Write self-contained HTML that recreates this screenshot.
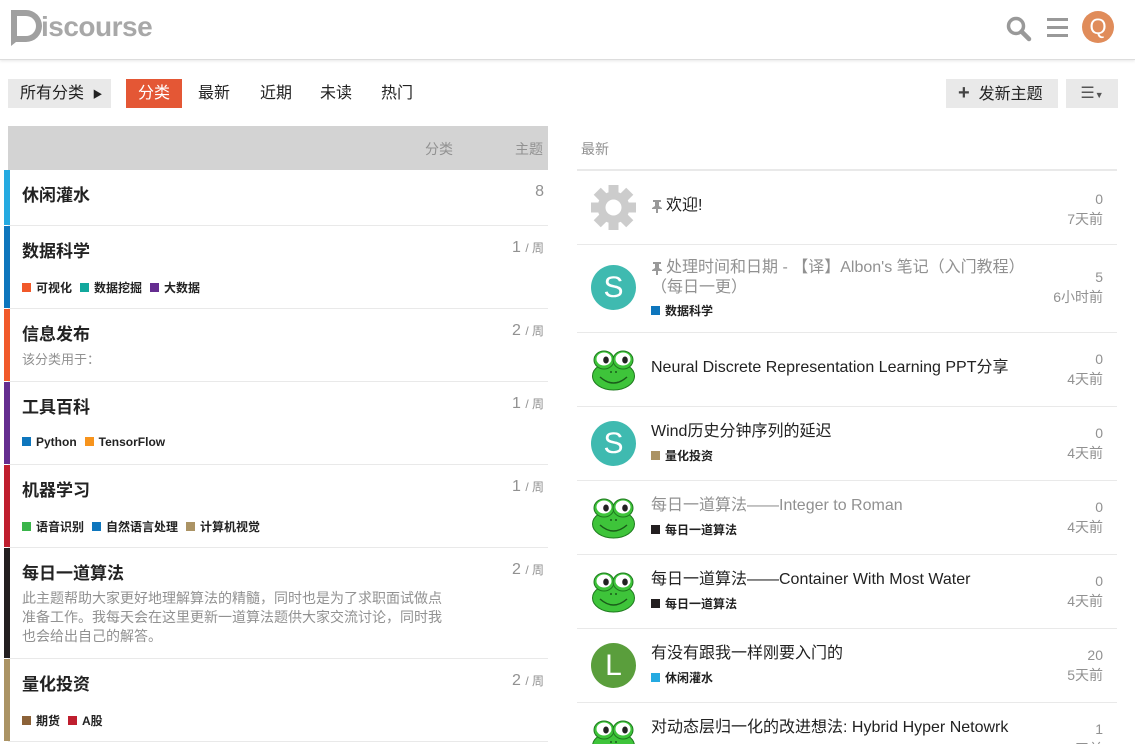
<!DOCTYPE html>
<html><head><meta charset="utf-8">
<style>
*{margin:0;padding:0;box-sizing:border-box}
body{width:1135px;height:744px;overflow:hidden;background:#fff;font-family:"Liberation Sans","Noto Sans CJK SC",sans-serif;color:#222;position:relative}
.a{position:absolute}
.hdr{left:0;top:0;width:1135px;height:60px;border-bottom:1px solid #ddd;box-shadow:0 1px 3px rgba(0,0,0,.1)}
.nav{top:79px;height:29px;font-size:16px;line-height:29px;padding:0 12px;white-space:nowrap}
.btn{background:#e9e9e9;color:#222}
.cat{left:8px;width:540px;border-bottom:1px solid #e9e9e9}
.bar{position:absolute;left:-4px;top:0;bottom:0;width:6px}
.cn{position:absolute;left:14px;top:11px;font-size:17px;font-weight:bold;color:#222}
.cnt{position:absolute;right:4px;top:13px;font-size:16px;color:#919191}
.cnt small{font-size:12px}
.subs{position:absolute;left:14px;font-size:12px;font-weight:bold;color:#222}
.sq{display:inline-block;width:9px;height:9px;margin-right:5px;vertical-align:-0px}
.subs span.i{margin-right:8px}
.desc{position:absolute;left:14px;top:42px;font-size:14px;color:#919191;line-height:19px}
.tp{left:577px;width:540px;border-bottom:1px solid #e9e9e9}
.av{position:absolute;left:14px;width:45px;height:45px}
.tt{position:absolute;left:74px;font-size:16px;color:#222;line-height:20px}
.tc{position:absolute;left:74px;font-size:12px;font-weight:bold;color:#222}
.rt{position:absolute;right:14px;text-align:right;font-size:14px;color:#919191;line-height:20px}
.letter{border-radius:50%;color:#fff;font-size:30px;text-align:center;line-height:45px;font-family:"Liberation Sans",sans-serif}
</style></head><body>
<svg width="0" height="0" style="position:absolute"><defs>
<g id="frog">
<ellipse cx="22.5" cy="29" rx="21" ry="14" fill="#3ec43a" stroke="#1e7a1e" stroke-width="1"/>
<ellipse cx="13" cy="13" rx="10" ry="9" fill="#3ec43a" stroke="#1e7a1e"/>
<ellipse cx="32" cy="13" rx="10" ry="9" fill="#3ec43a" stroke="#1e7a1e"/>
<ellipse cx="13" cy="12" rx="7.5" ry="6.5" fill="#fff"/>
<ellipse cx="32" cy="12" rx="7.5" ry="6.5" fill="#fff"/>
<ellipse cx="15" cy="13" rx="2.8" ry="3.5" fill="#222"/>
<ellipse cx="34" cy="13" rx="2.8" ry="3.5" fill="#222"/>
<path d="M9 30 Q22.5 42 36 30" stroke="#1a5c1a" stroke-width="1.5" fill="none"/>
<circle cx="20" cy="25" r="1" fill="#1a5c1a"/><circle cx="25" cy="25" r="1" fill="#1a5c1a"/>
</g></defs></svg>

<div class="a hdr"></div>
<div class="a" style="left:8px;top:6px;width:36px;height:40px">
<svg width="36" height="40" viewBox="0 0 36 40"><path d="M3 4 H18 A16 16 0 0 1 18 36 H8 L3 40 Z" fill="#a0a0a0"/><path d="M9 10 H18 A9 9 0 0 1 18 30 H9 Z" fill="#fff"/></svg></div>
<div class="a" style="left:41px;top:11px;font-size:28px;font-weight:bold;color:#a8a8a8;letter-spacing:-0.5px">iscourse</div>
<svg class="a" style="left:1006px;top:16px" width="26" height="26" viewBox="0 0 26 26"><circle cx="10" cy="10" r="7.5" stroke="#999" stroke-width="3.5" fill="none"/><path d="M15.5 15.5 L23 23" stroke="#999" stroke-width="4.5" stroke-linecap="round"/></svg>
<div class="a" style="left:1047px;top:18px;width:21px;height:3px;background:#999;box-shadow:0 8px 0 #999,0 16px 0 #999"></div>
<div class="a letter" style="left:1082px;top:11px;width:32px;height:32px;line-height:32px;font-size:22px;background:#e08c5a">Q</div>

<div class="a nav btn" style="left:8px;width:103px">所有分类 <span style="font-size:10px;margin-left:4px">▶</span></div>
<div class="a nav" style="left:126px;background:#e45735;color:#fff">分类</div>
<div class="a nav" style="left:186px">最新</div>
<div class="a nav" style="left:248px">近期</div>
<div class="a nav" style="left:308px">未读</div>
<div class="a nav" style="left:369px">热门</div>
<div class="a nav btn" style="left:946px;width:112px;padding:0 12px"><b style="font-size:20px;color:#444">+</b>&nbsp; 发新主题</div>
<div class="a nav btn" style="left:1066px;width:52px;text-align:center;color:#555">☰<span style="font-size:9px">▼</span></div>

<div class="a" style="left:8px;top:126px;width:540px;height:44px;background:#d3d3d3;font-size:14px;color:#919191">
<span class="a" style="left:417px;top:13px">分类</span><span class="a" style="left:507px;top:13px">主题</span></div>

<div class="a cat" style="top:170px;height:56px"><div class="bar" style="background:#25aae1"></div><div class="cn">休闲灌水</div><div class="cnt">8</div></div>
<div class="a cat" style="top:226px;height:83px"><div class="bar" style="background:#0e76bd"></div><div class="cn">数据科学</div><div class="cnt">1 <small>/ 周</small></div>
<div class="subs" style="top:53px"><span class="i"><span class="sq" style="background:#f1592a"></span>可视化</span><span class="i"><span class="sq" style="background:#12a89d"></span>数据挖掘</span><span class="i"><span class="sq" style="background:#652d90"></span>大数据</span></div></div>
<div class="a cat" style="top:309px;height:73px"><div class="bar" style="background:#f1592a"></div><div class="cn">信息发布</div><div class="cnt">2 <small>/ 周</small></div><div class="desc" style="top:41px;font-size:13px">该分类用于：</div></div>
<div class="a cat" style="top:382px;height:83px"><div class="bar" style="background:#652d90"></div><div class="cn">工具百科</div><div class="cnt">1 <small>/ 周</small></div>
<div class="subs" style="top:53px"><span class="i"><span class="sq" style="background:#0e76bd"></span>Python</span><span class="i"><span class="sq" style="background:#f7941d"></span>TensorFlow</span></div></div>
<div class="a cat" style="top:465px;height:83px"><div class="bar" style="background:#bf1e2e"></div><div class="cn">机器学习</div><div class="cnt">1 <small>/ 周</small></div>
<div class="subs" style="top:53px"><span class="i"><span class="sq" style="background:#3ab54a"></span>语音识别</span><span class="i"><span class="sq" style="background:#0e76bd"></span>自然语言处理</span><span class="i"><span class="sq" style="background:#ab9364"></span>计算机视觉</span></div></div>
<div class="a cat" style="top:548px;height:111px"><div class="bar" style="background:#231f20"></div><div class="cn">每日一道算法</div><div class="cnt">2 <small>/ 周</small></div>
<div class="desc" style="top:41px;width:430px">此主题帮助大家更好地理解算法的精髓，同时也是为了求职面试做点准备工作。我每天会在这里更新一道算法题供大家交流讨论，同时我也会给出自己的解答。</div></div>
<div class="a cat" style="top:659px;height:83px"><div class="bar" style="background:#ab9364"></div><div class="cn">量化投资</div><div class="cnt">2 <small>/ 周</small></div>
<div class="subs" style="top:53px"><span class="i"><span class="sq" style="background:#8c6238"></span>期货</span><span class="i"><span class="sq" style="background:#bf1e2e"></span>A股</span></div></div>

<div class="a" style="left:581px;top:139px;font-size:14px;color:#919191">最新</div>
<div class="a" style="left:577px;top:169px;width:540px;height:2px;background:#e9e9e9"></div>

<div class="a tp" style="top:171px;height:74px">
<svg class="av" style="top:14px" viewBox="0 0 45 45"><g fill="#ccc" transform="translate(22.5 22.5)"><circle r="16"/><g id="t"><rect x="-5" y="-23" width="10" height="10"/></g><use href="#t" transform="rotate(45)"/><use href="#t" transform="rotate(90)"/><use href="#t" transform="rotate(135)"/><use href="#t" transform="rotate(180)"/><use href="#t" transform="rotate(225)"/><use href="#t" transform="rotate(270)"/><use href="#t" transform="rotate(315)"/></g><circle cx="22.5" cy="22.5" r="8" fill="#fff"/></svg>
<svg class="a" style="left:74px;top:28px" width="12" height="14" viewBox="0 0 12 14"><path d="M2 1h8v2H8v4l3 2v1H7v4H5v-4H1V9l3-2V3H2z" fill="#999"/></svg>
<div class="tt" style="top:25px;left:89px">欢迎!</div>
<div class="rt" style="top:18px">0<br>7天前</div></div>

<div class="a tp" style="top:245px;height:88px">
<div class="av letter" style="top:20px;background:#3fbab0">S</div>
<svg class="a" style="left:74px;top:16px" width="12" height="14" viewBox="0 0 12 14"><path d="M2 1h8v2H8v4l3 2v1H7v4H5v-4H1V9l3-2V3H2z" fill="#999"/></svg>
<div class="tt" style="top:13px;color:#919191;width:385px;text-indent:15px">处理时间和日期 - 【译】Albon's 笔记（入门教程）（每日一更）</div>
<div class="tc" style="top:57px"><span class="sq" style="background:#0e76bd"></span>数据科学</div>
<div class="rt" style="top:22px">5<br>6小时前</div></div>

<div class="a tp" style="top:333px;height:74px">
<svg class="av" style="top:14px" viewBox="0 0 45 45"><use href="#frog"/></svg>
<div class="tt" style="top:25px">Neural Discrete Representation Learning PPT分享</div>
<div class="rt" style="top:16px">0<br>4天前</div></div>

<div class="a tp" style="top:407px;height:74px">
<div class="av letter" style="top:14px;background:#3fbab0">S</div>
<div class="tt" style="top:15px">Wind历史分钟序列的延迟</div>
<div class="tc" style="top:40px"><span class="sq" style="background:#ab9364"></span>量化投资</div>
<div class="rt" style="top:16px">0<br>4天前</div></div>

<div class="a tp" style="top:481px;height:74px">
<svg class="av" style="top:14px" viewBox="0 0 45 45"><use href="#frog"/></svg>
<div class="tt" style="top:15px;color:#919191">每日一道算法——Integer to Roman</div>
<div class="tc" style="top:40px"><span class="sq" style="background:#231f20"></span>每日一道算法</div>
<div class="rt" style="top:16px">0<br>4天前</div></div>

<div class="a tp" style="top:555px;height:74px">
<svg class="av" style="top:14px" viewBox="0 0 45 45"><use href="#frog"/></svg>
<div class="tt" style="top:15px">每日一道算法——Container With Most Water</div>
<div class="tc" style="top:40px"><span class="sq" style="background:#231f20"></span>每日一道算法</div>
<div class="rt" style="top:16px">0<br>4天前</div></div>

<div class="a tp" style="top:629px;height:74px">
<div class="av letter" style="top:14px;background:#5a9e3c">L</div>
<div class="tt" style="top:15px">有没有跟我一样刚要入门的</div>
<div class="tc" style="top:40px"><span class="sq" style="background:#25aae1"></span>休闲灌水</div>
<div class="rt" style="top:16px">20<br>5天前</div></div>

<div class="a tp" style="top:703px;height:41px;border:none;overflow:hidden">
<svg class="av" style="top:14px" viewBox="0 0 45 45"><use href="#frog"/></svg>
<div class="tt" style="top:15px">对动态层归一化的改进想法: Hybrid Hyper Netowrk</div>
<div class="rt" style="top:16px">1<br>5天前</div></div>
</body></html>
